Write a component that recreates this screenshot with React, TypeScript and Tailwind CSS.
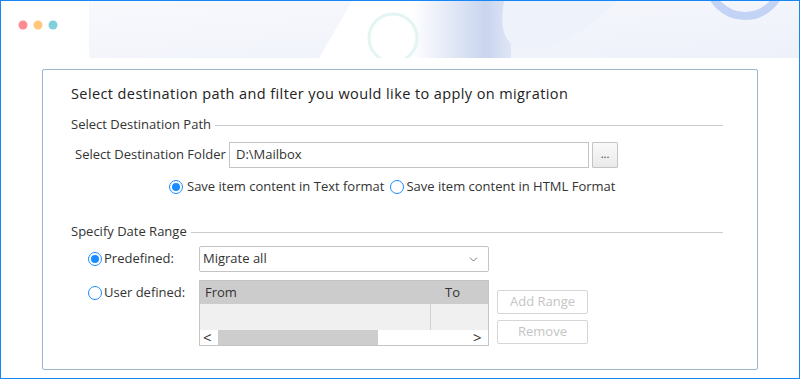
import { ChevronDown } from 'lucide-react';

function Radio({ checked }: { checked?: boolean }) {
  return (
    <span className="w-[14px] h-[14px] rounded-full border-[1.5px] border-[#1a8cff] bg-white flex items-center justify-center shrink-0">
      {checked && <span className="w-[8px] h-[8px] rounded-full bg-[#1a8cff]" />}
    </span>
  );
}

function SectionLabel({ text }: { text: string }) {
  return (
    <div className="flex items-center h-[16px] pl-[28px] pr-[34px] gap-[4px]">
      <span className="text-[13px] text-[#333] whitespace-nowrap">{text}</span>
      <div className="flex-1 h-px bg-[#c9cdd2]" />
    </div>
  );
}

function HeaderArt() {
  return (
    <svg width="798" height="57" viewBox="0 0 798 57" className="block">
      <defs>
        <linearGradient id="bg" x1="0" y1="0" x2="1" y2="1">
          <stop offset="0" stopColor="#f8f9fd" />
          <stop offset="1" stopColor="#eef1fa" />
        </linearGradient>
        <linearGradient id="shade" x1="0" y1="0" x2="1" y2="0">
          <stop offset="0" stopColor="#ffffff" />
          <stop offset="0.75" stopColor="#c9d5ee" />
          <stop offset="1" stopColor="#dfe6f6" />
        </linearGradient>
      </defs>
      <rect x="88" y="0" width="710" height="57" fill="url(#bg)" />
      <polygon points="351,0 430,0 430,57 318,57" fill="#ffffff" />
      <rect x="410" y="0" width="100" height="57" fill="url(#shade)" />
      <path d="M503,0 C499,25 500,48 530,48 C560,48 590,25 616,0 Z" fill="#eef2fa" />
      <circle cx="392" cy="37" r="24" fill="none" stroke="#e3f5f3" strokeWidth="3" />
      <circle cx="744" cy="-22" r="37" fill="none" stroke="#c2d3f5" strokeWidth="8" />
      <circle cx="22" cy="24" r="4.5" fill="#ff8a94" />
      <circle cx="37" cy="24" r="4.5" fill="#ffc87a" />
      <circle cx="52" cy="24" r="4.5" fill="#7fd0dc" />
    </svg>
  );
}

export default function App() {
  return (
    <div className="w-[800px] h-[379px] border border-[#1787f5] bg-white overflow-hidden text-[#333]" style={{ fontFamily: '"Open Sans", sans-serif' }}>
      <HeaderArt />

      {/* Panel */}
      <div className="ml-[41px] mt-[11px] w-[716px] h-[301px] border border-[#9fb5cf] rounded-[2px] flex flex-col">
        <div className="pl-[28px] pt-[14px] h-[36px] text-[14.5px] tracking-[0.4px] leading-[20px] text-[#222]">
          Select destination path and filter you would like to apply on migration
        </div>

        <div className="mt-[11px]">
          <SectionLabel text="Select Destination Path" />
        </div>

        {/* Folder row */}
        <div className="flex items-center mt-[9px] h-[26px]">
          <span className="ml-[32px] w-[154px] text-[13px] whitespace-nowrap">Select Destination Folder</span>
          <div className="w-[360px] h-[26px] border border-[#c4c4c4] bg-white flex items-center pl-[6px] text-[13px]">
            D:\Mailbox
          </div>
          <button className="ml-[3px] w-[26px] h-[26px] border border-[#c4c4c4] rounded-[1px] bg-gradient-to-b from-[#fafafa] to-[#e9e9e9] flex items-center justify-center text-[11px] leading-none pb-[4px] text-[#333]">
            ...
          </button>
        </div>

        {/* Format radios */}
        <div className="flex items-center mt-[11px] h-[16px] text-[13px]">
          <div className="ml-[126px] flex items-center gap-[4px]">
            <Radio checked />
            <span>Save item content in Text format</span>
          </div>
          <div className="ml-[6px] flex items-center gap-[2px]">
            <Radio />
            <span>Save item content in HTML Format</span>
          </div>
        </div>

        <div className="mt-[29px]">
          <SectionLabel text="Specify Date Range" />
        </div>

        {/* Predefined */}
        <div className="flex items-center mt-[6px] h-[26px]">
          <div className="ml-[45px] w-[111px] flex items-center gap-[2px] text-[13px]">
            <Radio checked />
            <span>Predefined:</span>
          </div>
          <div className="w-[290px] h-[26px] border border-[#c4c4c4] rounded-[2px] bg-white flex items-center justify-between pl-[3px] pr-[8px] text-[13px]">
            <span>Migrate all</span>
            <ChevronDown size={13} strokeWidth={1.3} className="text-[#444]" />
          </div>
        </div>

        {/* User defined */}
        <div className="flex mt-[8px]">
          <div className="ml-[45px] w-[111px] h-[26px] flex items-center gap-[2px] text-[13px]">
            <Radio />
            <span>User defined:</span>
          </div>
          <div className="w-[290px] h-[66px] border border-[#c4c4c4] bg-white flex flex-col text-[13px]">
            <div className="h-[23px] bg-[#cccccc] flex items-center">
              <span className="pl-[5px] w-[231px]">From</span>
              <span className="pl-[14px]">To</span>
            </div>
            <div className="h-[26px] bg-[#f0f0f0] flex">
              <div className="w-[231px] border-r border-[#d2d2d2]" />
            </div>
            <div className="h-[15px] flex items-center">
              <span className="w-[18px] text-[15px] leading-none pl-[3px]">&lt;</span>
              <div className="w-[160px] h-full bg-[#cdcdcd]" />
              <div className="flex-1" />
              <span className="w-[15px] text-[15px] leading-none">&gt;</span>
            </div>
          </div>
          <div className="ml-[8px] mt-[10px] flex flex-col gap-[6px]">
            <button className="w-[91px] h-[24px] border border-[#d6d6d6] rounded-[2px] bg-white text-[13px] text-[#c4c4c4]">Add Range</button>
            <button className="w-[91px] h-[24px] border border-[#d6d6d6] rounded-[2px] bg-white text-[13px] text-[#c4c4c4]">Remove</button>
          </div>
        </div>
      </div>
    </div>
  );
}
